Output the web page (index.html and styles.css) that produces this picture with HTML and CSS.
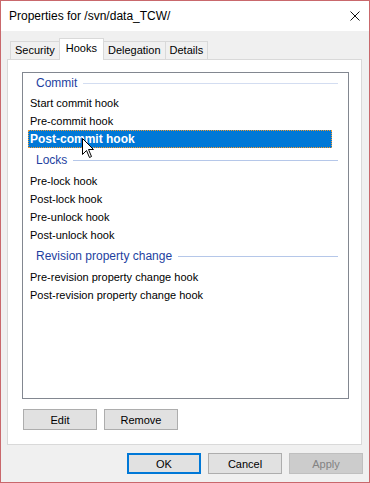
FILE: index.html
```html
<!DOCTYPE html>
<html>
<head>
  <title>Properties for /svn/data_TCW/</title>
  <link rel="stylesheet" href="styles.css">
</head>
<body>
  <div class="window">
    <!-- Title bar -->
    <div class="titlebar">
      <span class="title">Properties for /svn/data_TCW/</span>
      <svg class="close-x" viewBox="0 0 10 10">
        <path d="M0.5 0.5L9.5 9.5M9.5 0.5L0.5 9.5"/>
      </svg>
    </div>

    <div class="dialog-body">
      <!-- Tabs -->
      <div class="tabs">
        <div class="tab">Security</div>
        <div class="tab active">Hooks</div>
        <div class="tab">Delegation</div>
        <div class="tab">Details</div>
      </div>

      <div class="panel">
        <div class="listbox">
          <div class="group-header first"><span>Commit</span><i class="rule"></i></div>
          <div class="row">Start commit hook</div>
          <div class="row">Pre-commit hook</div>
          <div class="row selected">Post-commit hook</div>

          <div class="group-header"><span>Locks</span><i class="rule"></i></div>
          <div class="row">Pre-lock hook</div>
          <div class="row">Post-lock hook</div>
          <div class="row">Pre-unlock hook</div>
          <div class="row">Post-unlock hook</div>

          <div class="group-header"><span>Revision property change</span><i class="rule"></i></div>
          <div class="row">Pre-revision property change hook</div>
          <div class="row">Post-revision property change hook</div>

          <!-- mouse pointer -->
          <svg class="cursor" viewBox="0 0 13 20">
            <path d="M0.5 0.5V16.5L4.5 12.5L7.5 19.5L9.5 18.5L6.5 11.5H11.5Z"/>
          </svg>
        </div>

        <div class="panel-buttons">
          <button class="btn">Edit</button>
          <button class="btn">Remove</button>
        </div>
      </div>

      <div class="footer">
        <button class="btn default">OK</button>
        <button class="btn">Cancel</button>
        <button class="btn" disabled>Apply</button>
      </div>
    </div>
  </div>
</body>
</html>
```

FILE: styles.css
```css
body {
  margin: 0;
  padding: 0;
  font-family: 'Liberation Sans', Arial, sans-serif;
  font-size: 11px;
  color: #000;
}

.window {
  width: 370px;
  height: 483px;
  box-sizing: border-box;
  border: 1px solid #c9686c;
  display: flex;
  flex-direction: column;
  background: #f0f0f0;
}

/* Title bar */
.titlebar {
  height: 30px;
  background: #fff;
  display: flex;
  align-items: center;
  justify-content: space-between;
  padding: 0 9px 0 8px;
}

.title {
  font-size: 12px;
  color: #000;
}

.close-x {
  width: 10px;
  height: 10px;
}

.close-x path {
  stroke: #111;
  stroke-width: 1;
  fill: none;
}

/* Body */
.dialog-body {
  flex: 1;
  padding: 7px 7px 0 6px;
  display: flex;
  flex-direction: column;
}

.tabs {
  display: flex;
  align-items: flex-end;
  height: 21px;
  padding-left: 3px;
}

.tab {
  height: 18px;
  box-sizing: border-box;
  border: 1px solid #d9d9d9;
  border-bottom: none;
  margin-left: -1px;
  padding: 0 4px;
  line-height: 17px;
  background: #f0f0f0;
}

.tab:first-child {
  margin-left: 0;
}

.tab.active {
  height: 22px;
  line-height: 19px;
  background: #fff;
  margin-bottom: -1px;
  padding: 0 6px;
  position: relative;
  z-index: 1;
}

.panel {
  height: 386px;
  box-sizing: border-box;
  border: 1px solid #d9d9d9;
  background: #fff;
  padding: 12px 0 0 14px;
}

.listbox {
  position: relative;
  width: 327px;
  height: 327px;
  box-sizing: border-box;
  border: 1px solid #828790;
  background: #fff;
}

.group-header {
  display: flex;
  align-items: center;
  height: 20px;
  padding: 0 10px 2px 13px;
  margin-top: 2px;
  font-size: 12px;
  color: #1e3f9f;
}

.group-header.first {
  margin-top: 0;
  padding-bottom: 1px;
}

.group-header .rule {
  flex: 1;
  height: 1px;
  margin-left: 6px;
  margin-top: 1px;
  background: #b5c7e9;
}

.group-header.first .rule {
  background: #d3ddf1;
}

.row {
  height: 18px;
  box-sizing: border-box;
  margin: 0 16px 0 5px;
  padding-left: 1px;
  border: 1px solid transparent;
  line-height: 16px;
  white-space: nowrap;
}

.row.selected {
  background: #0078d7;
  color: #fff;
  font-weight: bold;
  font-size: 12px;
  border: 1px dotted #f39a2f;
}

.cursor {
  position: absolute;
  left: 59px;
  top: 65px;
  width: 13px;
  height: 20px;
}

.cursor path {
  fill: #fff;
  stroke: #000;
  stroke-width: 1;
}

.panel-buttons {
  display: flex;
  gap: 7px;
  margin: 10px 0 0 1px;
}

.btn {
  width: 74px;
  height: 21px;
  box-sizing: border-box;
  background: #e1e1e1;
  border: 1px solid #adadad;
  border-radius: 0;
  font-family: 'Liberation Sans', Arial, sans-serif;
  font-size: 11px;
  color: #000;
  padding: 0;
}

.btn.default {
  border: 2px solid #0078d7;
}

.btn:disabled {
  background: #cccccc;
  border-color: #bfbfbf;
  color: #838383;
}

.footer {
  display: flex;
  justify-content: flex-end;
  gap: 7px;
  margin: 8px -1px 0 0;
}
```
